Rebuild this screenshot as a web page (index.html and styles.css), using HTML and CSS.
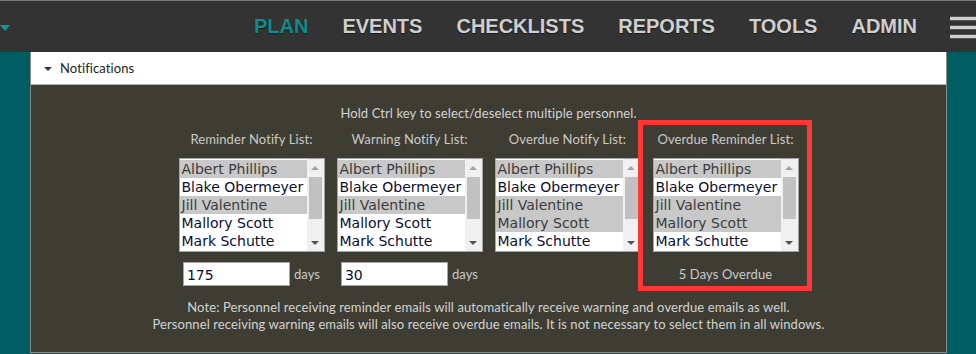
FILE: index.html
```html
<!DOCTYPE html>
<html lang="en">
<head>
	<meta charset="UTF-8">
	<meta name="viewport" content="width=device-width, initial-scale=1" />
	<title>Plan - Notifications</title>
	<link rel="stylesheet" href="styles.css">
</head>
<body>

<header class="topbar">
	<span class="topbar-caret"></span>
	<nav class="menu">
		<a class="active">PLAN</a>
		<a>EVENTS</a>
		<a>CHECKLISTS</a>
		<a>REPORTS</a>
		<a>TOOLS</a>
		<a>ADMIN</a>
	</nav>
	<span class="burger"><i></i><i></i><i></i></span>
</header>

<section class="panel">
	<div class="panel-head"><span class="caret"></span>Notifications</div>
	<div class="panel-body">
		<p class="hint">Hold Ctrl key to select/deselect multiple personnel.</p>

		<div class="lists">
			<div class="list">
				<div class="list-label">Reminder Notify List:</div>
				<div class="listbox">
					<div class="options">
						<div class="opt sel">Albert Phillips</div>
						<div class="opt">Blake Obermeyer</div>
						<div class="opt sel">Jill Valentine</div>
						<div class="opt">Mallory Scott</div>
						<div class="opt">Mark Schutte</div>
					</div>
					<div class="scroll"><span class="up"></span><span class="thumb"></span><span class="down"></span></div>
				</div>
				<div class="list-foot">
					<input class="days" value="175"/>
					<span>days</span>
				</div>
			</div>

			<div class="list">
				<div class="list-label">Warning Notify List:</div>
				<div class="listbox">
					<div class="options">
						<div class="opt sel">Albert Phillips</div>
						<div class="opt">Blake Obermeyer</div>
						<div class="opt sel">Jill Valentine</div>
						<div class="opt">Mallory Scott</div>
						<div class="opt">Mark Schutte</div>
					</div>
					<div class="scroll"><span class="up"></span><span class="thumb"></span><span class="down"></span></div>
				</div>
				<div class="list-foot">
					<input class="days" value="30"/>
					<span>days</span>
				</div>
			</div>

			<div class="list">
				<div class="list-label">Overdue Notify List:</div>
				<div class="listbox">
					<div class="options">
						<div class="opt sel">Albert Phillips</div>
						<div class="opt">Blake Obermeyer</div>
						<div class="opt sel">Jill Valentine</div>
						<div class="opt sel">Mallory Scott</div>
						<div class="opt">Mark Schutte</div>
					</div>
					<div class="scroll"><span class="up"></span><span class="thumb"></span><span class="down"></span></div>
				</div>
				<div class="list-foot"></div>
			</div>

			<div class="list flagged">
				<div class="list-label">Overdue Reminder List:</div>
				<div class="listbox">
					<div class="options">
						<div class="opt sel">Albert Phillips</div>
						<div class="opt">Blake Obermeyer</div>
						<div class="opt sel">Jill Valentine</div>
						<div class="opt sel">Mallory Scott</div>
						<div class="opt">Mark Schutte</div>
					</div>
					<div class="scroll"><span class="up"></span><span class="thumb"></span><span class="down"></span></div>
				</div>
				<div class="list-foot">5 Days Overdue</div>
			</div>
		</div>

		<p class="note">
			Note: Personnel receiving reminder emails will automatically receive warning and overdue emails as well.<br/>
			Personnel receiving warning emails will also receive overdue emails. It is not necessary to select them in all windows.
		</p>
	</div>
</section>

</body>
</html>
```

FILE: styles.css
```css
html, body {
	margin: 0;
	height: 100%;
	overflow: hidden;
}
body {
	background: #005e62;
	font-family: Lato, "Open Sans", sans-serif;
	font-size: 13px;
	letter-spacing: 0.1px;
}
.topbar {
	display: flex;
	align-items: center;
	height: 52px;
	box-sizing: border-box;
	background: #333333;
	border-top: 1px solid #7a7a7a;
	overflow: hidden;
}
.topbar-caret {
	flex: none;
	width: 0;
	height: 0;
	border-left: 5px solid transparent;
	border-right: 5px solid transparent;
	border-top: 6px solid #0b9a99;
	margin-top: 2px;
}
.menu {
	display: flex;
	gap: 34px;
	margin-left: auto;
}
.menu a {
	font-family: "Liberation Sans", Arial, sans-serif;
	font-weight: bold;
	font-size: 20px;
	letter-spacing: 0;
	color: #cfcfcf;
	text-shadow: 0 1px 1px #1a1a1a;
}
.menu a.active {
	color: #0e8d8b;
}
.burger {
	flex: none;
	display: flex;
	flex-direction: column;
	gap: 4px;
	width: 26px;
	margin-left: 33px;
	margin-top: 2px;
}
.burger i {
	display: block;
	width: 26px;
	height: 3px;
	background: #d0d0d0;
	border-top: 1px solid #555;
	border-bottom: 1px solid #555;
}
.panel {
	margin: 0 29px 0 30px;
	border: 1px solid #8a8a8a;
	border-top: 0;
}
.panel-head {
	display: flex;
	align-items: center;
	gap: 8px;
	height: 32px;
	padding-left: 13px;
	background: #fff;
	color: #222;
	border-bottom: 1px solid #b0b0b0;
}
.caret {
	width: 0;
	height: 0;
	border-left: 4px solid transparent;
	border-right: 4px solid transparent;
	border-top: 4px solid #333;
	margin-top: 1px;
}
.panel-body {
	background: #3e3d33;
	padding: 20px 0 19px;
	color: #d2d2d2;
	text-align: center;
}
.hint {
	margin: 0;
	line-height: 16px;
}
.lists {
	display: flex;
	justify-content: center;
	gap: 12px;
	margin-top: 10px;
}
.list {
	display: flex;
	flex-direction: column;
	align-items: center;
	width: 146px;
}
.list-label {
	line-height: 16px;
	margin-bottom: 11px;
	color: #c9c9c9;
}
.listbox {
	display: flex;
	width: 146px;
	height: 94px;
	box-sizing: border-box;
	border: 1px solid #a5a5a5;
	background: #fff;
}
.options {
	flex: 1;
	padding-top: 1px;
	text-align: left;
	font-family: "DejaVu Sans", Verdana, sans-serif;
	font-size: 14px;
	letter-spacing: 0;
}
.opt {
	height: 18px;
	line-height: 19px;
	padding-left: 2px;
	color: #0c0c35;
	white-space: nowrap;
	overflow: hidden;
}
.opt.sel {
	background: #c8c8c8;
	color: #3c3c3c;
}
.scroll {
	display: flex;
	flex-direction: column;
	align-items: center;
	width: 17px;
	background: #f0f0f0;
}
.scroll .up, .scroll .down {
	width: 0;
	height: 0;
	border-left: 4px solid transparent;
	border-right: 4px solid transparent;
}
.scroll .up {
	border-bottom: 4px solid #a3a3a3;
	margin-top: 7px;
}
.scroll .thumb {
	width: 13px;
	height: 42px;
	margin-top: 7px;
	background: #c1c1c1;
}
.scroll .down {
	border-top: 4px solid #505050;
	margin-top: auto;
	margin-bottom: 6px;
}
.list-foot {
	display: flex;
	align-items: center;
	justify-content: center;
	gap: 4px;
	height: 24px;
	margin-top: 10px;
	color: #c9c9c9;
}
input.days {
	width: 107px;
	height: 24px;
	box-sizing: border-box;
	border: 1px solid #a5a5a5;
	padding: 1px 3px 0;
	font-family: "DejaVu Sans", Verdana, sans-serif;
	font-size: 14px;
	color: #0c0c35;
	outline: none;
}
.flagged {
	position: relative;
}
.flagged::after {
	content: "";
	position: absolute;
	top: -11px;
	bottom: -5px;
	left: -15px;
	right: -13px;
	border: 5px solid #ff3636;
}
.note {
	margin: 13px 0 0;
	line-height: 17px;
}
```
